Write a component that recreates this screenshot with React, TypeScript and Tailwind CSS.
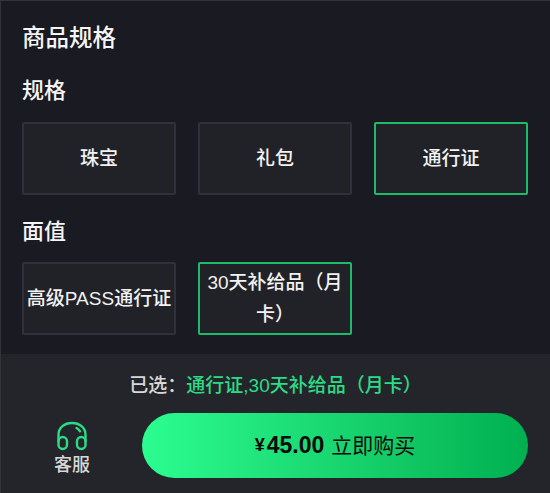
const font = { fontFamily: '"Liberation Sans", "Noto Sans CJK SC", sans-serif' }

const specOptions = [
  { label: '珠宝', selected: false },
  { label: '礼包', selected: false },
  { label: '通行证', selected: true },
]

const valueOptions = [
  { label: '高级PASS通行证', selected: false },
  { label: '30天补给品（月卡）', selected: true },
]

function OptionCard({ label, selected }: { label: string; selected: boolean }) {
  return (
    <div
      className={`flex h-[73px] w-[154px] items-center justify-center rounded-[2px] border-2 bg-[#212227] text-center text-[19px] leading-[32px] font-medium text-[#f2f2f2] ${
        selected ? 'border-[#1dbb68]' : 'border-[#30313c]'
      }`}
    >
      {label}
    </div>
  )
}

function HeadsetIcon() {
  return (
    <svg width="32" height="30" viewBox="0 0 32 30" fill="none" stroke="#2bdc86" strokeWidth="2.4" strokeLinecap="round">
      <path d="M2.5 20 V14 C2.5 6.5 8.5 2 16 2 C23.5 2 29.5 6.5 29.5 14 V20" />
      <path d="M20.5 7 C22 7.8 23.2 8.9 24 10.3" />
      <rect x="2.5" y="16" width="8.5" height="12" rx="4.2" />
      <rect x="21" y="16" width="8.5" height="12" rx="4.2" />
    </svg>
  )
}

export default function App() {
  return (
    <div style={font} className="flex h-[493px] w-[550px] flex-col overflow-hidden border-t border-l border-[#33343a] bg-[#191a22]">
      <div className="flex h-[353px] flex-col pl-[21px]">
        <div className="mt-[22px] text-[23.5px] leading-[30px] font-medium text-[#f5f5f5]">商品规格</div>
        <div className="mt-[23px] text-[22px] leading-[30px] font-medium text-[#f5f5f5]">规格</div>
        <div className="mt-[16px] flex gap-[22px]">
          {specOptions.map((o) => (
            <OptionCard key={o.label} label={o.label} selected={o.selected} />
          ))}
        </div>
        <div className="mt-[22px] text-[22px] leading-[30px] font-medium text-[#f5f5f5]">面值</div>
        <div className="mt-[15px] flex gap-[22px]">
          {valueOptions.map((o) => (
            <OptionCard key={o.label} label={o.label} selected={o.selected} />
          ))}
        </div>
      </div>
      <div className="flex flex-1 flex-col bg-[#24252b]">
        <div className="mt-[21px] text-center text-[19px] leading-[22px] font-medium text-[#d8d8d8]">
          已选：<span className="text-[#2bdc86]">通行证,30天补给品（月卡）</span>
        </div>
        <div className="mt-[16px] flex items-start pl-[21px]">
          <div className="flex w-[100px] flex-col items-center pt-[8px]">
            <HeadsetIcon />
            <span className="mt-[3px] text-[18px] leading-[22px] font-medium text-[#d8d8d8]">客服</span>
          </div>
          <button className="ml-[20px] flex h-[65px] w-[386px] items-center justify-center rounded-full bg-gradient-to-r from-[#2cfd90] to-[#00b050] text-[#0a0a0a]">
            <span className="text-[18px] font-bold">¥</span>
            <span className="ml-[2px] text-[23px] font-bold">45.00</span>
            <span className="ml-[7px] text-[21px]">立即购买</span>
          </button>
        </div>
      </div>
    </div>
  )
}
